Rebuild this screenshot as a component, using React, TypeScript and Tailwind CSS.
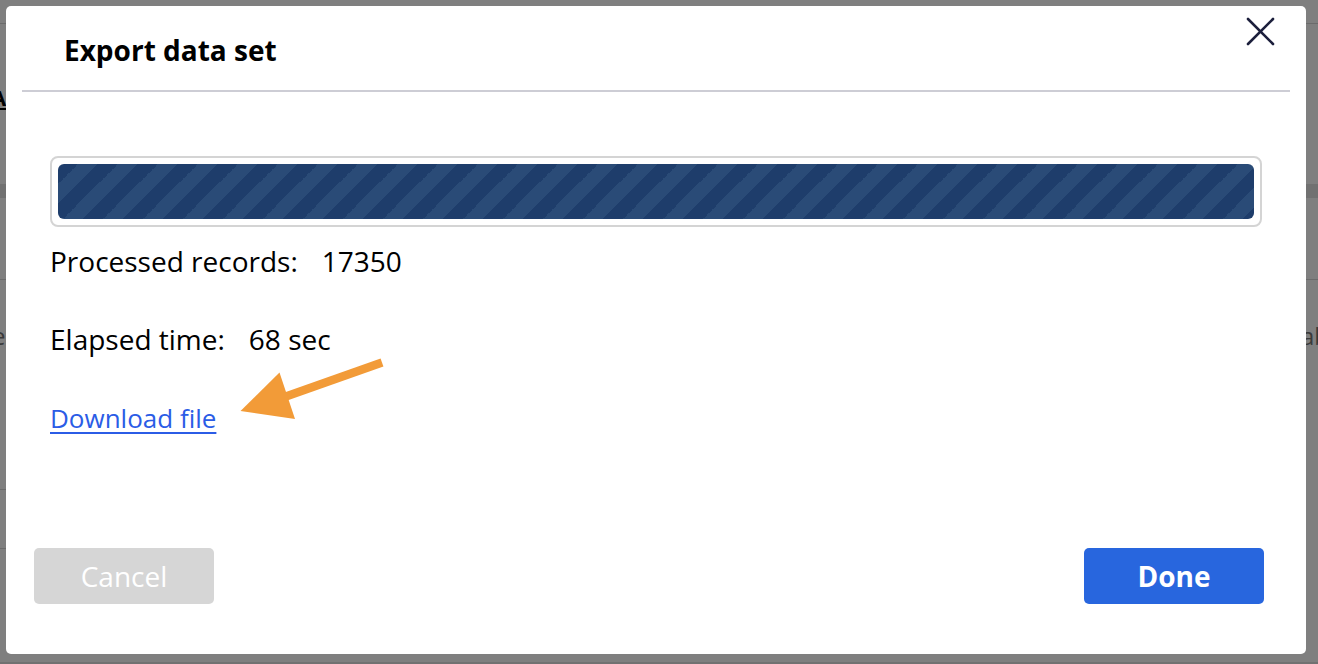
import React from 'react';

// background page, dimmed by the modal overlay
const BackgroundPage: React.FC = () => (
  <div className="h-[664px] w-full overflow-hidden bg-white text-[#747474]">
    <div className="h-[24px] border-b border-[#d6d6d6]" />
    <div className="flex h-[160px] items-center">
      <span className="-ml-[9px] mb-[14px] text-[22px] font-bold text-black underline">A</span>
    </div>
    <div className="h-[14px] bg-[#e2e2e2]" />
    <div className="h-[82px] border-b border-[#d6d6d6]" />
    <div className="flex h-[210px] flex-col">
      <div className="mt-[38px] flex items-center justify-between text-[24px]">
        <span className="-ml-[8px]">e</span>
        <span className="-mr-[11px]">ab</span>
      </div>
      <div className="mt-auto h-px w-[20px] bg-[#d6d6d6]" />
    </div>
    <div className="h-[59px]">
      <div className="mt-[58px] h-px w-[20px] bg-[#d6d6d6]" />
    </div>
    <div className="h-[55px]" />
    <div className="h-[12px] bg-[#e2e2e2]" />
  </div>
);

const CloseIcon: React.FC = () => (
  <svg width="31" height="31" viewBox="0 0 31 31" fill="none" stroke="#1c1f3c" strokeWidth="2.6" strokeLinecap="round">
    <path d="M3 3 L28 28" />
    <path d="M28 3 L3 28" />
  </svg>
);

const Arrow: React.FC = () => (
  <svg className="pointer-events-none absolute left-0 top-0" width="1318" height="664" viewBox="0 0 1318 664">
    <path d="M382 362.5 L283 397.5" stroke="#f29b38" strokeWidth="8.5" />
    <polygon points="240.5,411 279.5,372.5 295,419" fill="#f29b38" />
  </svg>
);

const App: React.FC = () => {
  const processed = 17350;
  const elapsed = 68;

  return (
    <div className="relative h-[664px] w-[1318px] overflow-hidden font-['Open_Sans',sans-serif]">
      <BackgroundPage />

      {/* overlay */}
      <div className="absolute inset-0 bg-black/50" />

      {/* modal */}
      <div className="absolute left-[6px] top-[6px] flex h-[648px] w-[1300px] flex-col rounded-[5px] bg-white text-black">
        <div className="mx-4 border-b-2 border-[#cdcdd5] pl-[42px] pt-[26px] pb-[22px]">
          <h2 className="text-[28px] font-bold leading-[36px]">Export data set</h2>
        </div>
        <button className="absolute right-[30px] top-[10px]" aria-label="Close">
          <CloseIcon />
        </button>

        <div className="flex flex-1 flex-col px-[44px] pt-[64px]">
          <div className="h-[71px] rounded-[8px] border-2 border-[#d4d4d4] p-[6px]">
            <div className="h-full w-full rounded-[6px] bg-[#1e3d6b] bg-[linear-gradient(-45deg,#2a4b77_25%,transparent_25%,transparent_50%,#2a4b77_50%,#2a4b77_75%,transparent_75%,transparent)] bg-[length:40px_40px]" />
          </div>

          <div className="mt-[16px] flex flex-col gap-[42px] text-[28px] leading-[36px]">
            <div>
              Processed records:<span className="ml-[24px]">{processed}</span>
            </div>
            <div>
              Elapsed time:<span className="ml-[24px]">{elapsed} sec</span>
            </div>
            <div>
              <a href="#" className="text-[26px] text-[#2b5ce6] underline decoration-[2px] underline-offset-[4px]">
                Download file
              </a>
            </div>
          </div>
        </div>

        <div className="flex items-center justify-between pb-[50px] pl-[28px] pr-[42px]">
          <button className="h-[56px] w-[180px] rounded-[5px] bg-[#d6d6d6] text-[28px] text-white" disabled>
            Cancel
          </button>
          <button className="h-[56px] w-[180px] rounded-[5px] bg-[#2866de] text-[28px] font-bold text-white">
            Done
          </button>
        </div>
      </div>

      <Arrow />
    </div>
  );
};

export default App;
